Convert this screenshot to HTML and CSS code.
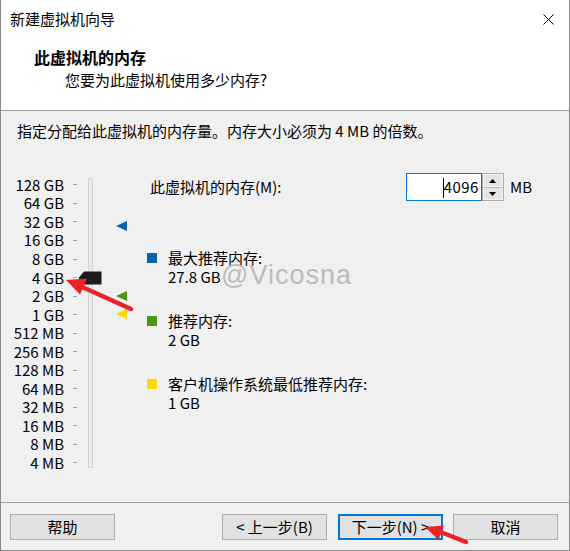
FILE: index.html
```html
<!DOCTYPE html>
<html lang="zh-CN">
<head>
<meta charset="utf-8">
<title>新建虚拟机向导</title>
<link rel="stylesheet" href="styles.css">
</head>
<body>
<div class="window">
  <div class="top">
    <div class="titlebar">
      <span class="title">新建虚拟机向导</span>
      <span class="close"><svg width="11" height="11" viewBox="0 0 11 11"><path d="M0.5 0.5L10.5 10.5M10.5 0.5L0.5 10.5" stroke="#000" stroke-width="1" fill="none"/></svg></span>
    </div>
    <div class="heading">此虚拟机的内存</div>
    <div class="subheading">您要为此虚拟机使用多少内存?</div>
  </div>
  <p class="desc">指定分配给此虚拟机的内存量。内存大小必须为 4 MB 的倍数。</p>
  <div class="main">
    <div class="slider">
      <div class="rows">
        <div class="row"><span class="lbl">128 GB</span><span class="tick"></span></div>
        <div class="row"><span class="lbl">64 GB</span><span class="tick"></span></div>
        <div class="row"><span class="lbl">32 GB</span><span class="tick"></span></div>
        <div class="row"><span class="lbl">16 GB</span><span class="tick"></span></div>
        <div class="row"><span class="lbl">8 GB</span><span class="tick"></span></div>
        <div class="row"><span class="lbl">4 GB</span><span class="tick"></span></div>
        <div class="row"><span class="lbl">2 GB</span><span class="tick"></span></div>
        <div class="row"><span class="lbl">1 GB</span><span class="tick"></span></div>
        <div class="row"><span class="lbl">512 MB</span><span class="tick"></span></div>
        <div class="row"><span class="lbl">256 MB</span><span class="tick"></span></div>
        <div class="row"><span class="lbl">128 MB</span><span class="tick"></span></div>
        <div class="row"><span class="lbl">64 MB</span><span class="tick"></span></div>
        <div class="row"><span class="lbl">32 MB</span><span class="tick"></span></div>
        <div class="row"><span class="lbl">16 MB</span><span class="tick"></span></div>
        <div class="row"><span class="lbl">8 MB</span><span class="tick"></span></div>
        <div class="row"><span class="lbl">4 MB</span><span class="tick"></span></div>
      </div>
      <div class="track"></div>
      <svg class="thumb" width="24" height="14" viewBox="0 0 24 14"><polygon points="0.5,7 6,0.5 23.5,0.5 23.5,13.5 6,13.5" fill="#1b1b1b"/></svg>
      <svg class="mark mark-max" width="11" height="10" viewBox="0 0 11 10"><polygon points="0,5 11,0 11,10" fill="#0563b0"/></svg>
      <svg class="mark mark-rec" width="11" height="10" viewBox="0 0 11 10"><polygon points="0,5 11,0 11,10" fill="#4b9510"/></svg>
      <svg class="mark mark-min" width="11" height="10" viewBox="0 0 11 10"><polygon points="0,5 11,0 11,10" fill="#fcd800"/></svg>
    </div>
    <div class="panel">
      <div class="mem-row">
        <span class="mem-label">此虚拟机的内存(M):</span>
        <div class="spin-group">
          <div class="input"><span class="caret"></span>4096</div>
          <div class="spinner">
            <div class="spin-btn"><svg width="7" height="4" viewBox="0 0 7 4"><polygon points="3.5,0 7,4 0,4" fill="#000"/></svg></div>
            <div class="spin-btn"><svg width="7" height="4" viewBox="0 0 7 4"><polygon points="0,0 7,0 3.5,4" fill="#000"/></svg></div>
          </div>
          <span class="unit">MB</span>
        </div>
      </div>
      <div class="legend">
        <div class="item"><span class="sq sq-blue"></span><div class="item-text"><div>最大推荐内存:</div><div>27.8 GB</div></div></div>
        <div class="item"><span class="sq sq-green"></span><div class="item-text"><div>推荐内存:</div><div>2 GB</div></div></div>
        <div class="item"><span class="sq sq-yellow"></span><div class="item-text"><div>客户机操作系统最低推荐内存:</div><div>1 GB</div></div></div>
      </div>
    </div>
  </div>
  <div class="footer">
    <button class="btn">帮助</button>
    <button class="btn btn-back">&lt; 上一步(B)</button>
    <button class="btn btn-next">下一步(N) &gt;</button>
    <button class="btn btn-cancel">取消</button>
  </div>
  <div class="watermark">@Vicosna</div>
  <svg class="annot" width="570" height="551" viewBox="0 0 570 551">
    <line x1="131" y1="309" x2="80" y2="286" stroke="#e8232a" stroke-width="4.5" stroke-linecap="round"/>
    <polygon points="66,280 87,278.5 80,294.5" fill="#e8232a"/>
    <line x1="466" y1="542" x2="438" y2="531" stroke="#e8232a" stroke-width="4.5" stroke-linecap="round"/>
    <polygon points="425,527 444,525.5 438.5,540" fill="#e8232a"/>
  </svg>
</div>
</body>
</html>
```

FILE: styles.css
```css
* { box-sizing: border-box; }
html, body { margin: 0; padding: 0; }
body {
  width: 570px;
  height: 551px;
  overflow: hidden;
  font-family: "Noto Sans CJK SC", "Microsoft YaHei", sans-serif;
  font-size: 15px;
  color: #000;
  background: #f0f0f0;
}
.window {
  position: relative;
  width: 570px;
  height: 551px;
  background: #f0f0f0;
  border-left: 1px solid #8a8a8a;
  border-right: 1px solid #8a8a8a;
  border-bottom: 1px solid #8a8a8a;
  display: flex;
  flex-direction: column;
}
.top {
  background: #fff;
  height: 111px;
  border-bottom: 1px solid #a0a0a0;
}
.titlebar {
  height: 38px;
  display: flex;
  align-items: center;
  padding-left: 9px;
}
.title { line-height: 38px; }
.close {
  margin-left: auto;
  width: 42px;
  height: 38px;
  display: flex;
  align-items: center;
  justify-content: center;
}
.heading {
  margin-top: 8px;
  padding-left: 33px;
  font-size: 16px;
  font-weight: bold;
  line-height: 22px;
}
.subheading {
  margin-top: 1px;
  padding-left: 64px;
  line-height: 22px;
}
.desc {
  margin: 10px 0 0;
  padding-left: 16px;
  line-height: 20px;
}
.main {
  display: flex;
  flex: 1;
}
.slider {
  position: relative;
  display: flex;
  margin-top: 34.7px;
  align-self: flex-start;
}
.rows { display: flex; flex-direction: column; }
.row {
  display: flex;
  align-items: center;
  height: 18.53px;
}
.lbl {
  width: 63px;
  text-align: right;
  line-height: 18px;
  white-space: nowrap;
}
.tick {
  width: 4px;
  height: 1px;
  margin-left: 9px;
  background: #a4a4a4;
}
.track {
  width: 5px;
  height: 290px;
  margin-left: 11px;
  margin-top: 2.3px;
  background: #e7eaea;
  border: 1px solid #d4d6d6;
}
.thumb { position: absolute; left: 77px; top: 95px; }
.mark { position: absolute; left: 115px; }
.mark-max { top: 45.3px; }
.mark-rec { top: 115.3px; }
.mark-min { top: 133.3px; }
.panel {
  flex: 1;
  margin-left: 54px;
  padding-top: 32px;
  padding-right: 37px;
}
.mem-row {
  display: flex;
  align-items: center;
  height: 28px;
}
.mem-label { margin-left: 3px; line-height: 20px; }
.spin-group {
  margin-left: auto;
  display: flex;
  align-items: center;
}
.input {
  width: 76px;
  height: 28px;
  background: #fff;
  border: 1px solid #0078d7;
  text-align: right;
  padding-right: 2px;
  line-height: 26px;
  letter-spacing: 0.5px;
}
.caret {
  display: inline-block;
  width: 1px;
  height: 20px;
  background: #000;
  vertical-align: -5px;
}
.spinner {
  width: 22px;
  height: 28px;
  border: 1px solid #adadad;
  display: flex;
  flex-direction: column;
  background: #e5e5e5;
}
.spin-btn {
  flex: 1;
  display: flex;
  align-items: center;
  justify-content: center;
  border: 1px solid #f4f4f4;
}
.spin-btn + .spin-btn { border-top: 1px solid #b8b8b8; }
.unit { margin-left: 6px; line-height: 20px; }
.legend {
  margin-top: 46.5px;
  display: flex;
  flex-direction: column;
  gap: 25px;
}
.item { display: flex; }
.sq {
  width: 10px;
  height: 10px;
  margin-top: 5.5px;
  flex: none;
}
.sq-blue { background: #0563b0; }
.sq-green { background: #4b9510; }
.sq-yellow { background: #fcd800; }
.item-text {
  margin-left: 11px;
  line-height: 19px;
}
.footer {
  height: 48px;
  border-top: 1px solid #a0a0a0;
  display: flex;
  align-items: flex-start;
  padding: 11px 11px 0 9px;
}
.btn {
  width: 105px;
  height: 26px;
  font-family: inherit;
  font-size: 15px;
  color: #000;
  background: #e1e1e1;
  border: 1px solid #adadad;
  padding: 0;
  line-height: 22px;
}
.btn-back { margin-left: auto; }
.btn-next { margin-left: 11px; border: 2px solid #0078d7; }
.btn-cancel { margin-left: 10px; }
.watermark {
  position: absolute;
  left: 220px;
  top: 260px;
  font-family: "Liberation Sans", Arial, sans-serif;
  font-size: 27px;
  line-height: 30px;
  color: #bcbcbc;
  letter-spacing: 1px;
}
.annot {
  position: absolute;
  left: -1px;
  top: 0;
  pointer-events: none;
}
```
